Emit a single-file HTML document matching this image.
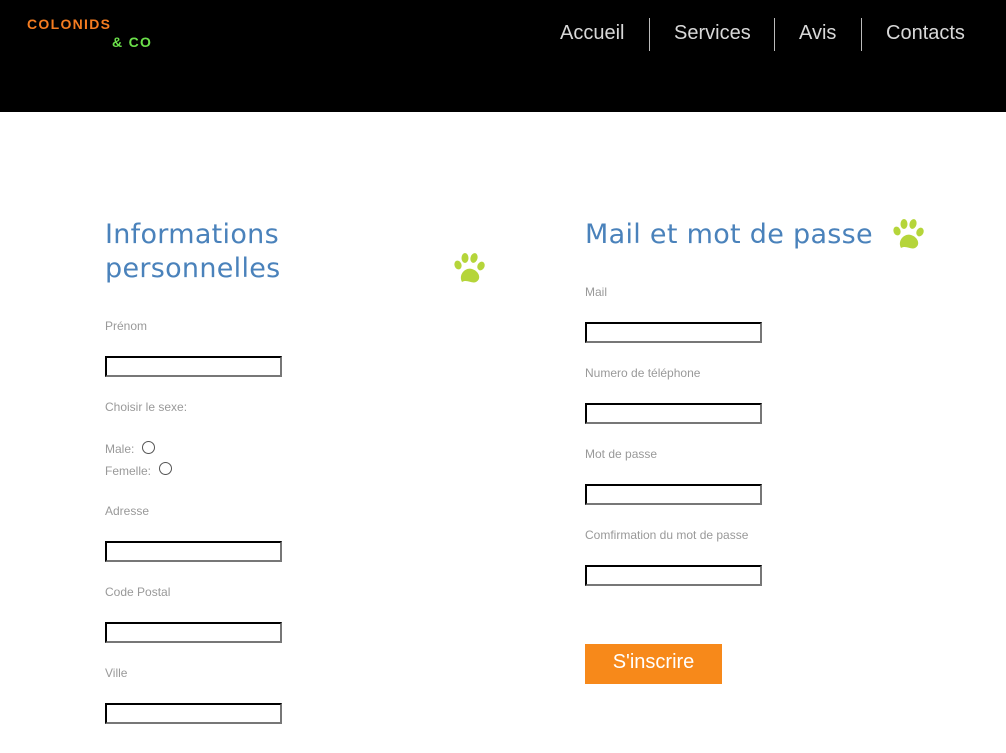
<!DOCTYPE html>
<html><head><meta charset="utf-8"><style>
*{margin:0;padding:0;box-sizing:border-box}
body{width:1006px;height:753px;background:#fff;position:relative;overflow:hidden;font-family:"Liberation Sans",Arial,sans-serif}
.hdr{position:absolute;left:0;top:0;width:1006px;height:112px;background:#000}
.logo1{position:absolute;left:27px;top:16px;color:#f47c20;font-weight:bold;font-size:14px;letter-spacing:1.3px}
.logo2{position:absolute;left:112px;top:34px;color:#6be04a;font-weight:bold;font-size:14px;letter-spacing:1.3px}
.nav{position:absolute;top:22px;color:#d8d8d8;font-size:20px}
.sep{position:absolute;top:18px;width:1px;height:33px;background:#bbb}
h2{position:absolute;font-family:"Comic Sans MS","DejaVu Sans",cursive,sans-serif;font-weight:normal;color:#4a82bb;font-size:27px;line-height:34px;letter-spacing:0.3px}
.l{position:absolute;font-size:12px;color:#999}
.i{position:absolute;width:177px;height:21px;border:2px inset #767676;border-top-color:#222;border-left-color:#222;border-right-color:#777;border-bottom-color:#777}
.r{position:absolute;width:13px;height:13px;border:1px solid #555;border-radius:50%}
.btn{position:absolute;left:585px;top:644px;width:137px;height:40px;background:#f7891a;color:#fff;font-size:20px;text-align:center;line-height:36px}
</style></head><body>
<div class="hdr">
<div class="logo1">COLONIDS</div><div class="logo2">&amp; CO</div>
<div class="nav" style="left:560px">Accueil</div>
<div class="sep" style="left:649px"></div>
<div class="nav" style="left:674px">Services</div>
<div class="sep" style="left:774px"></div>
<div class="nav" style="left:799px">Avis</div>
<div class="sep" style="left:861px"></div>
<div class="nav" style="left:886px">Contacts</div>
</div>

<h2 style="left:105px;top:218px">Informations<br>personnelles</h2>
<svg style="position:absolute;left:452px;top:252px" width="34" height="34" viewBox="0 0 34 34" fill="#b5d53a">
<ellipse cx="6" cy="13" rx="3.5" ry="4.5" transform="rotate(-20 6 13)"/><ellipse cx="13" cy="6" rx="3.5" ry="5"/><ellipse cx="22" cy="6" rx="3.5" ry="5" transform="rotate(15 22 6)"/><ellipse cx="29" cy="14" rx="3.5" ry="4.5" transform="rotate(25 29 14)"/>
<path d="M10 30 C6 22 14 15 20 17 C27 19 30 27 24 30 C20 32 15 27 10 30Z"/></svg>

<div class="l" style="left:105px;top:319px">Prénom</div>
<div class="i" style="left:105px;top:356px"></div>
<div class="l" style="left:105px;top:400px">Choisir le sexe:</div>
<div class="l" style="left:105px;top:442px">Male:</div><div class="r" style="left:142px;top:441px"></div>
<div class="l" style="left:105px;top:464px">Femelle:</div><div class="r" style="left:159px;top:462px"></div>
<div class="l" style="left:105px;top:504px">Adresse</div>
<div class="i" style="left:105px;top:541px"></div>
<div class="l" style="left:105px;top:585px">Code Postal</div>
<div class="i" style="left:105px;top:622px"></div>
<div class="l" style="left:105px;top:666px">Ville</div>
<div class="i" style="left:105px;top:703px"></div>

<h2 style="left:585px;top:218px">Mail et mot de passe</h2>
<svg style="position:absolute;left:891px;top:218px" width="34" height="34" viewBox="0 0 34 34" fill="#b5d53a">
<ellipse cx="6" cy="13" rx="3.5" ry="4.5" transform="rotate(-20 6 13)"/><ellipse cx="13" cy="6" rx="3.5" ry="5"/><ellipse cx="22" cy="6" rx="3.5" ry="5" transform="rotate(15 22 6)"/><ellipse cx="29" cy="14" rx="3.5" ry="4.5" transform="rotate(25 29 14)"/>
<path d="M10 30 C6 22 14 15 20 17 C27 19 30 27 24 30 C20 32 15 27 10 30Z"/></svg>

<div class="l" style="left:585px;top:285px">Mail</div>
<div class="i" style="left:585px;top:322px"></div>
<div class="l" style="left:585px;top:366px">Numero de téléphone</div>
<div class="i" style="left:585px;top:403px"></div>
<div class="l" style="left:585px;top:447px">Mot de passe</div>
<div class="i" style="left:585px;top:484px"></div>
<div class="l" style="left:585px;top:528px">Comfirmation du mot de passe</div>
<div class="i" style="left:585px;top:565px"></div>
<div class="btn">S'inscrire</div>
</body></html>
